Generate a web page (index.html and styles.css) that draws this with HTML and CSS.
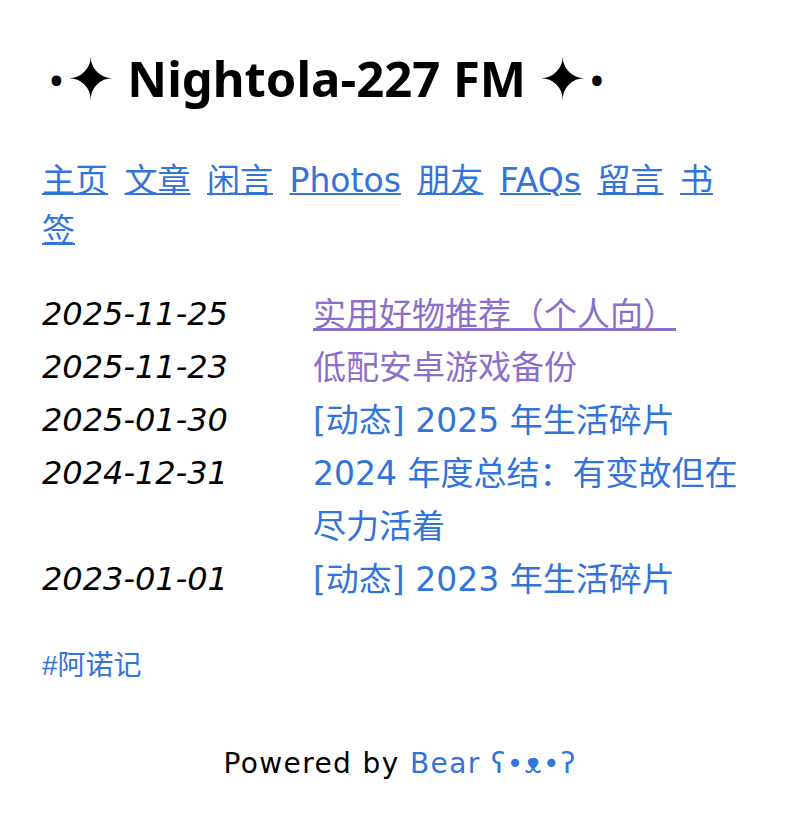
FILE: index.html
```html
<!DOCTYPE html>
<html lang="zh-CN">
<head>
<meta charset="utf-8">
<title>Nightola-227 FM</title>
<link rel="stylesheet" href="styles.css">
</head>
<body>
<div class="page">
  <header>
    <a class="title-link" href="#"><h1 class="title"><span class="dot">•</span><span class="star">✦</span> Nightola-227 FM <span class="star">✦</span><span class="dot">•</span></h1></a>
    <nav class="nav">
      <a href="#">主页</a> <a href="#">文章</a> <a href="#">闲言</a> <a href="#">Photos</a> <a href="#">朋友</a> <a href="#">FAQs</a> <a href="#">留言</a> <a href="#">书签</a>
    </nav>
  </header>
  <main>
    <ul class="posts">
      <li><span class="date">2025-11-25</span><a class="post visited hover" href="#">实用好物推荐（个人向）</a></li>
      <li><span class="date">2025-11-23</span><a class="post visited" href="#">低配安卓游戏备份</a></li>
      <li><span class="date">2025-01-30</span><a class="post" href="#">[动态] 2025 年生活碎片</a></li>
      <li><span class="date">2024-12-31</span><a class="post" href="#">2024 年度总结：有变故但在尽力活着</a></li>
      <li><span class="date">2023-01-01</span><a class="post" href="#">[动态] 2023 年生活碎片</a></li>
    </ul>
    <div class="tags"><a href="#">#阿诺记</a></div>
  </main>
</div>
<footer class="footer">Powered by <a href="#">Bear ʕ•ᴥ•ʔ</a></footer>
</body>
</html>
```
FILE: styles.css
```css
html, body {
  margin: 0;
  padding: 0;
  background: #ffffff;
}
body {
  color: #000000;
  font-family: "DejaVu Sans", "Noto Sans CJK SC", sans-serif;
  font-size: 33px;
}
.page {
  width: 702px;
  padding-left: 42px;
}
.title-link {
  color: #000000;
  text-decoration: none;
}
.title {
  font-family: "Noto Sans", "DejaVu Sans", sans-serif;
  font-weight: 700;
  font-size: 49px;
  line-height: 60px;
  margin: 48px 0 0;
  white-space: nowrap;
}
.title .dot {
  font-size: 34px;
  vertical-align: 0.12em;
  margin: 0 4px 0 8px;
}
.title .dot:last-child {
  margin: 0 0 0 4px;
}
.title .star {
  font-family: "DejaVu Sans", sans-serif;
  font-size: 57px;
  line-height: 50px;
  vertical-align: -0.04em;
}
.nav {
  margin-top: 46px;
  line-height: 50px;
}
.nav a {
  color: #3273dc;
  margin-right: 6px;
  text-decoration: underline;
  text-decoration-thickness: 2px;
}
.posts {
  list-style: none;
  margin: 32px 0 0;
  padding: 0;
}
.posts li {
  display: flex;
  align-items: flex-start;
}
.date {
  flex: 0 0 271px;
  font-family: "DejaVu Sans", sans-serif;
  font-style: italic;
  font-size: 32px;
  line-height: 53px;
  color: #000000;
}
.post {
  flex: 1 1 auto;
  line-height: 53px;
  color: #3273dc;
  text-decoration: none;
}
.post.visited {
  color: #8b6fcb;
}
.post.hover {
  text-decoration: underline;
  text-decoration-thickness: 3px;
}
.tags {
  margin-top: 40px;
  font-family: "Liberation Sans", "Noto Sans CJK SC", sans-serif;
  font-size: 28px;
  line-height: 40px;
}
.tags a {
  color: #3273dc;
  text-decoration: none;
}
.footer {
  margin-top: 58px;
  text-align: center;
  font-family: "DejaVu Sans", sans-serif;
  font-size: 28px;
  letter-spacing: 1.4px;
  line-height: 40px;
  padding-bottom: 20px;
}
.footer a {
  color: #3273dc;
  text-decoration: none;
}
```
